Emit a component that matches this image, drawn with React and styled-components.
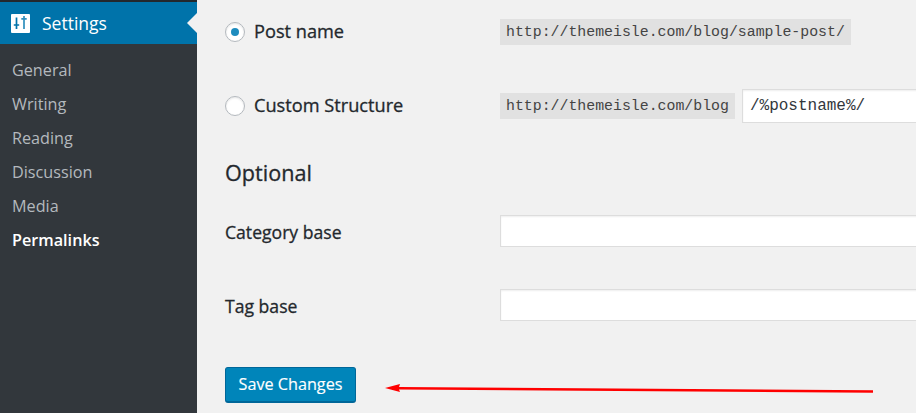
import React from "react";
import styled, { createGlobalStyle } from "styled-components";

const GlobalStyle = createGlobalStyle`
html, body {
  margin: 0;
  padding: 0;
  height: 100%;
  overflow: hidden;
  background: #f1f1f1;
}
#root {
  height: 100%;
}
`;

const subItems = ["General", "Writing", "Reading", "Discussion", "Media", "Permalinks"];

const SettingsIcon = () => (
  <svg width="19" height="19" viewBox="0 0 19 19">
    <rect width="19" height="19" rx="1" fill="#fff" />
    <path d="M5.5 3.5v11.5M2.8 11h5.4" stroke="#0073aa" strokeWidth="1.7" fill="none" />
    <path d="M13 2v13M10.3 4.8h5.4" stroke="#2f8fbd" strokeWidth="1.7" fill="none" />
  </svg>
);

const App = () => {
  return (
    <Page>
      <GlobalStyle />
      <Sidebar>
        <ActiveMenu>
          <SettingsIcon />
          <span>Settings</span>
          <MenuNotch />
        </ActiveMenu>
        <SubMenu>
          {subItems.map((item) => (
            <SubItem key={item} $current={item === "Permalinks"}>{item}</SubItem>
          ))}
        </SubMenu>
      </Sidebar>
      <Main>
        <Row $height={63}>
          <RadioLabel>
            <Radio $checked />
            <span>Post name</span>
          </RadioLabel>
          <Code>http://themeisle.com/blog/sample-post/</Code>
        </Row>
        <Row $height={85}>
          <RadioLabel>
            <Radio />
            <span>Custom Structure</span>
          </RadioLabel>
          <Code>http://themeisle.com/blog</Code>
          <StructureInput readOnly value="/%postname%/" />
        </Row>
        <Heading>Optional</Heading>
        <Row $height={74}>
          <FieldLabel>Category base</FieldLabel>
          <TextInput readOnly value="" />
        </Row>
        <Row $height={74}>
          <FieldLabel>Tag base</FieldLabel>
          <TextInput readOnly value="" />
        </Row>
        <SaveButton>Save Changes</SaveButton>
      </Main>
      <Arrow width="500" height="14" viewBox="0 0 500 14">
        <path d="M0 5 L15 1 L14 4 L488 7.2 L488 9.8 L14 6.5 L15 9 Z" fill="#ff0000" />
      </Arrow>
    </Page>
  );
};

const Page = styled.div`
position: relative;
display: flex;
height: 413px;
overflow: hidden;
font-family: "Open Sans", sans-serif;
color: #23282d;
`;

const Sidebar = styled.div`
width: 197px;
flex-shrink: 0;
background: #32373c;
padding-top: 2px;
box-sizing: border-box;
box-shadow: inset 0 2px 0 #23282d;
`;

const ActiveMenu = styled.div`
position: relative;
display: flex;
align-items: center;
gap: 12px;
height: 42px;
padding-left: 11px;
background: #0073aa;
color: #fff;
font-size: 17.5px;
`;

const MenuNotch = styled.div`
position: absolute;
right: 0;
top: 11px;
border: 10px solid transparent;
border-right-color: #f1f1f1;
border-left-width: 0;
`;

const SubMenu = styled.div`
display: flex;
flex-direction: column;
padding-top: 9px;
`;

const SubItem = styled.div`
height: 34px;
line-height: 34px;
padding-left: 12px;
font-size: 16.2px;
color: ${(p) => (p.$current ? "#fff" : "#b4b9be")};
font-weight: ${(p) => (p.$current ? 600 : 400)};
`;

const Main = styled.div`
flex: 1;
min-width: 0;
display: flex;
flex-direction: column;
padding: 0 0 0 28px;
`;

const Row = styled.div`
display: flex;
align-items: center;
height: ${(p) => p.$height}px;
flex-shrink: 0;
`;

const RadioLabel = styled.div`
display: flex;
align-items: center;
gap: 9px;
width: 275px;
flex-shrink: 0;
font-size: 18.2px;
-webkit-text-stroke: 0.3px #23282d;
span:last-child {
  margin-top: -1px;
}
`;

const Radio = styled.span`
position: relative;
flex-shrink: 0;
width: 20px;
height: 20px;
box-sizing: border-box;
border-radius: 50%;
background: #fff;
border: 1px solid #b4b9be;
box-shadow: inset 0 1px 2px rgba(0, 0, 0, 0.1);
&::after {
  content: "";
  display: ${(p) => (p.$checked ? "block" : "none")};
  position: absolute;
  left: 5px;
  top: 5px;
  width: 8px;
  height: 8px;
  border-radius: 50%;
  background: #1e8cbe;
}
`;

const Code = styled.code`
display: block;
height: 26px;
line-height: 26px;
padding: 0 6px;
background: #e1e1e1;
color: #444;
font-family: "Liberation Mono", monospace;
font-size: 14.87px;
white-space: nowrap;
`;

const TextInput = styled.input`
flex: 1;
min-width: 0;
height: 32px;
box-sizing: border-box;
margin: 0 -20px 0 0;
padding: 0 8px;
background: #fff;
border: 1px solid #ddd;
box-shadow: inset 0 1px 2px rgba(0, 0, 0, 0.07);
outline: none;
`;

const StructureInput = styled(TextInput)`
height: 34px;
margin-left: 7px;
padding-left: 7px;
font-family: "Liberation Mono", monospace;
font-size: 16px;
color: #32373c;
`;

const Heading = styled.h2`
margin: 3px 0 0;
height: 43px;
line-height: 43px;
font-size: 21.6px;
font-weight: 400;
-webkit-text-stroke: 0.3px #23282d;
color: #23282d;
`;

const FieldLabel = styled.div`
width: 275px;
flex-shrink: 0;
margin-top: 2px;
font-size: 17.6px;
-webkit-text-stroke: 0.3px #23282d;
`;

const SaveButton = styled.button`
align-self: flex-start;
width: 131px;
height: 36px;
margin-top: 25px;
padding: 0 0 2px;
border: 1px solid #006799;
border-bottom-width: 2px;
border-radius: 3px;
background: #0085ba;
color: #fff;
font-family: "Open Sans", sans-serif;
font-size: 16.2px;
-webkit-text-stroke: 0.15px #fff;
`;

const Arrow = styled.svg`
position: absolute;
left: 385px;
top: 383px;
`;

export default App;
